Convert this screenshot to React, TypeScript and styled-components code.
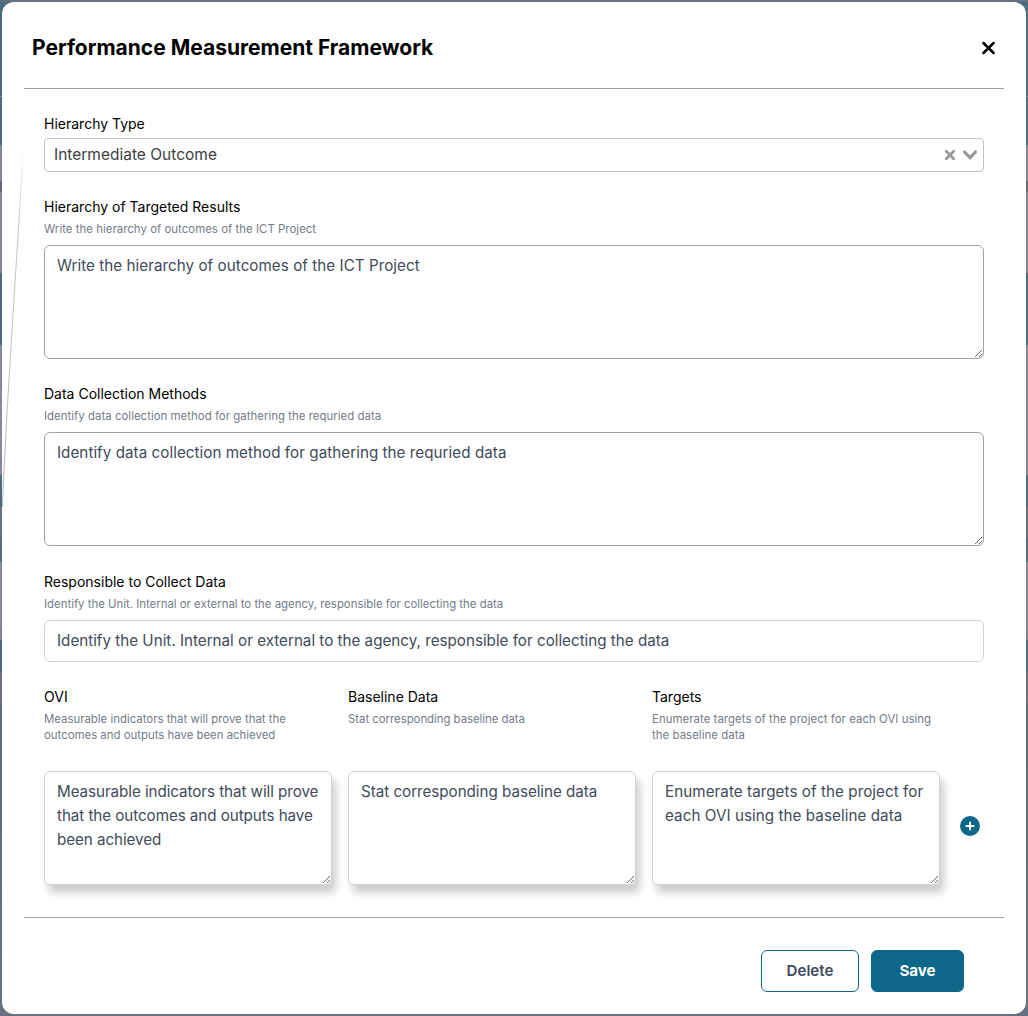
import React from "react";
import styled, { createGlobalStyle } from "styled-components";

const GlobalStyle = createGlobalStyle`
  *, *::before, *::after { box-sizing: border-box; }
  body { margin: 0; font-family: Inter, "Liberation Sans", sans-serif; }
`;

const Backdrop = styled.div`
  height: 1016px;
  padding: 2px;
  background:
    linear-gradient(#66707f, #66707f) 0 0 / 100% 2px no-repeat,
    linear-gradient(#66707f, #66707f) 0 100% / 100% 2px no-repeat,
    linear-gradient(
      #4a6c80 0 96px, #7f93a0 96px 97px, #4a6c80 97px 145px,
      #858897 145px 181px, #686b77 181px 192px, #858897 192px 273px,
      #4a6c7e 273px 345px, #868998 345px 463px, #7f8392 463px 464px, #868998 464px 475px,
      #4a6c7e 475px 507px, #686f80 507px 538px, #566b7c 538px 562px,
      #868998 562px 628px, #7e8392 628px 640px, #4a6c80 640px 672px,
      #6a7080 672px 703px, #5d6c7d 703px 763px, #677182 1000px
    );
`;

const Dialog = styled.div`
  position: relative;
  display: flex;
  flex-direction: column;
  height: 1012px;
  padding: 0 22px;
  border-radius: 12px;
  background: #fff;
`;

const Streak = styled.svg`
  position: absolute;
  left: 0;
  top: 143px;
  pointer-events: none;
`;

const Header = styled.header`
  display: flex;
  align-items: center;
  justify-content: space-between;
  height: 87px;
  padding: 6px 8px 0;
  border-bottom: 1px solid #9ca3af;
`;

const Title = styled.h1`
  margin: 0;
  font-size: 21px;
  line-height: 28px;
  font-weight: 700;
  color: #000;
`;

const IconButton = styled.button`
  display: flex;
  padding: 0;
  border: 0;
  background: none;
  color: inherit;
`;

const Form = styled.main`
  display: flex;
  flex-direction: column;
  height: 829px;
  padding: 25px 20px 0;
  border-bottom: 1px solid #9ca3af;
`;

const Field = styled.div<{ $after?: number }>`
  display: flex;
  flex-direction: column;
  margin-bottom: ${(p) => p.$after ?? 25}px;
`;

const Label = styled.label`
  margin-bottom: 4px;
  font-size: 14px;
  line-height: 20px;
  color: #000;
`;

const Hint = styled.p<{ $track?: number }>`
  margin: 0 0 8px;
  font-size: 11.4px;
  line-height: 16px;
  letter-spacing: ${(p) => p.$track ?? 0}px;
  color: #747b89;
`;

const Select = styled.div`
  display: flex;
  align-items: center;
  height: 34px;
  padding: 0 5px 0 9px;
  border: 1px solid #c4c4c4;
  border-radius: 4px;
  color: #404040;
  font-size: 15.5px;
  line-height: 24px;
`;

const SelectValue = styled.span`
  flex: 1;
`;

const SelectIcons = styled.div`
  display: flex;
  align-items: center;
  gap: 5px;
  color: #999;
`;

const Area = styled.textarea<{ $raised?: boolean; $track?: number }>`
  display: block;
  width: 100%;
  height: 114px;
  margin: 0;
  padding: 8px 12px;
  border: 1px solid ${(p) => (p.$raised ? "#d1d5db" : "#9ca3af")};
  border-radius: 6px;
  box-shadow: ${(p) => (p.$raised ? "4px 8px 8px rgba(0, 0, 0, 0.2)" : "none")};
  background: #fff;
  color: #414b5a;
  font-family: inherit;
  font-size: 15.2px;
  line-height: 24px;
  letter-spacing: ${(p) => p.$track ?? 0}px;
  overflow: hidden;
  outline: none;
`;

const Input = styled.input`
  height: 42px;
  padding: 7px 12px 9px;
  border: 1px solid #d1d5db;
  border-radius: 6px;
  background: #fff;
  color: #414b5a;
  font-family: inherit;
  font-size: 15.2px;
  outline: none;
`;

const Columns = styled.div`
  display: grid;
  grid-template-columns: repeat(3, 288px) 20px;
  column-gap: 16px;
`;

const ColumnHead = styled.div`
  display: flex;
  flex-direction: column;
  height: 84px;
`;

const AddCell = styled.div`
  grid-column: 4;
  display: flex;
  align-items: center;
  padding: 0 0 4px 4px;
`;

const AddButton = styled(IconButton)`
  flex: none;
  align-items: center;
  justify-content: center;
  width: 20px;
  height: 20px;
  border-radius: 50%;
  background: #0c6788;
  color: #fff;
`;

const Footer = styled.footer`
  display: flex;
  justify-content: flex-end;
  gap: 12px;
  padding: 32px 40px 0 0;
`;

const Button = styled.button<{ $primary?: boolean }>`
  width: ${(p) => (p.$primary ? 93 : 98)}px;
  height: 42px;
  padding: 0 0 2px;
  border: 1px solid #0c6788;
  border-radius: 6px;
  background: ${(p) => (p.$primary ? "#0c6788" : "#fff")};
  color: ${(p) => (p.$primary ? "#fff" : "#414b5a")};
  font-family: inherit;
  font-size: 15.1px;
  font-weight: ${(p) => (p.$primary ? 700 : 600)};
`;

const columns = [
  {
    title: "OVI",
    text: "Measurable indicators that will prove that the outcomes and outputs have been achieved",
    track: -0.06,
    hintTrack: 0,
  },
  { title: "Baseline Data", text: "Stat corresponding baseline data", track: -0.03, hintTrack: -0.03 },
  {
    title: "Targets",
    text: "Enumerate targets of the project for each OVI using the baseline data",
    track: 0.06,
    hintTrack: 0.05,
  },
];

const areas = [
  { title: "Hierarchy of Targeted Results", text: "Write the hierarchy of outcomes of the ICT Project", after: 25 },
  { title: "Data Collection Methods", text: "Identify data collection method for gathering the requried data", after: 26 },
];

const unitText =
  "Identify the Unit. Internal or external to the agency, responsible for collecting the data";

export default function App() {
  return (
    <Backdrop>
      <GlobalStyle />
      <Dialog role="dialog" aria-modal="true">
        <Streak width="22" height="364" viewBox="0 0 22 364" fill="none">
          <defs>
            <linearGradient id="fade" x1="0" y1="0" x2="0" y2="1">
              <stop offset="0" stopColor="#ccc" stopOpacity="0" />
              <stop offset="0.2" stopColor="#ccc" />
              <stop offset="1" stopColor="#b8bcc0" />
            </linearGradient>
          </defs>
          <path d="M21.3 2C18 70 4 260 0.4 362" stroke="url(#fade)" strokeWidth="1.1" />
        </Streak>
        <Header>
          <Title>Performance Measurement Framework</Title>
          <IconButton aria-label="Close">
            <svg width="15" height="14" viewBox="0 0 15 14" fill="none" stroke="#000" strokeWidth="2.5" strokeLinecap="round">
              <path d="M2.4 2L12.6 12M12.6 2L2.4 12" />
            </svg>
          </IconButton>
        </Header>
        <Form>
          <Field>
            <Label>Hierarchy Type</Label>
            <Select>
              <SelectValue>Intermediate Outcome</SelectValue>
              <SelectIcons>
                <svg width="14" height="14" viewBox="0 0 14 14" fill="none" stroke="currentColor" strokeWidth="2.8" strokeLinecap="round">
                  <path d="M3.3 3.3L10.7 10.7M10.7 3.3L3.3 10.7" />
                </svg>
                <svg width="16" height="12" viewBox="0 0 16 12" fill="none" stroke="currentColor" strokeWidth="3.2" strokeLinecap="round">
                  <path d="M2.5 3L8 8.6L13.5 3" />
                </svg>
              </SelectIcons>
            </Select>
          </Field>
          {areas.map((a) => (
            <Field key={a.title} $after={a.after}>
              <Label>{a.title}</Label>
              <Hint $track={0.035}>{a.text}</Hint>
              <Area $track={0.045} defaultValue={a.text} spellCheck={false} />
            </Field>
          ))}
          <Field>
            <Label>Responsible to Collect Data</Label>
            <Hint>{unitText}</Hint>
            <Input defaultValue={unitText} spellCheck={false} />
          </Field>
          <Columns>
            {columns.map((c) => (
              <ColumnHead key={c.title}>
                <Label>{c.title}</Label>
                <Hint $track={c.hintTrack}>{c.text}</Hint>
              </ColumnHead>
            ))}
            <span />
            {columns.map((c) => (
              <Area key={c.title} $raised $track={c.track} defaultValue={c.text} spellCheck={false} />
            ))}
            <AddCell>
              <AddButton aria-label="Add row">
                <svg width="10" height="10" viewBox="0 0 10 10" stroke="currentColor" strokeWidth="1.9" strokeLinecap="round">
                  <path d="M5 1.4V8.6M1.4 5H8.6" />
                </svg>
              </AddButton>
            </AddCell>
          </Columns>
        </Form>
        <Footer>
          <Button>Delete</Button>
          <Button $primary>Save</Button>
        </Footer>
      </Dialog>
    </Backdrop>
  );
}
